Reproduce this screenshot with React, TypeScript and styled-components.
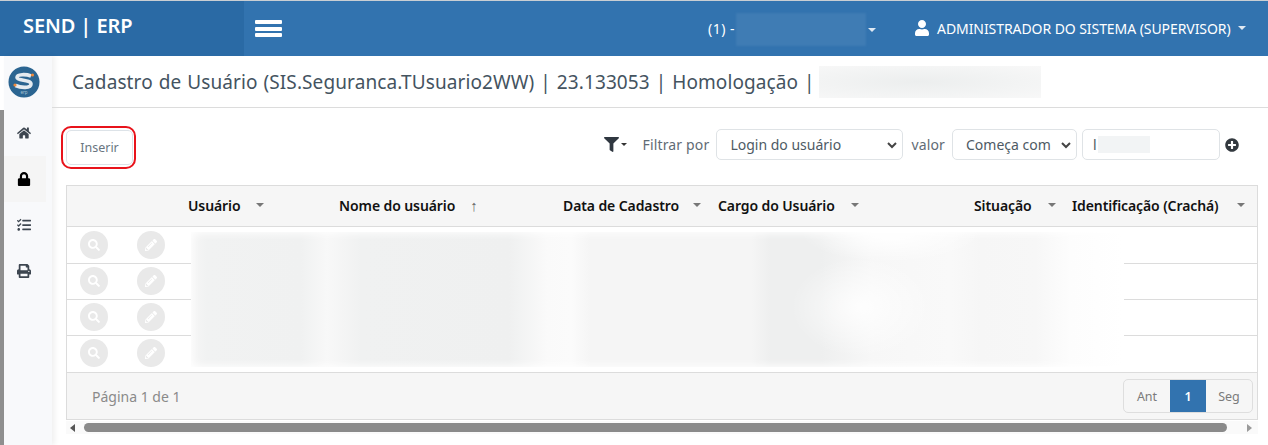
import React from "react";
import styled, { createGlobalStyle } from "styled-components";
import { FaFilter, FaHome, FaLock, FaPencilAlt, FaPlusCircle, FaPrint, FaSearch, FaTasks, FaUser } from "react-icons/fa";

const Global = createGlobalStyle`
  html, body { margin: 0; padding: 0; background: #fff; overflow: hidden; }
  body { font-family: "Noto Sans", "Open Sans", sans-serif; }
`;
const Page = styled.div`
  width: 1268px; height: 445px; display: flex; flex-direction: column; overflow: hidden;
  border-top: 1px solid #c9ced3; box-sizing: border-box; background: #fff;
`;
const Header = styled.header`
  height: 55px; flex: none; display: flex; align-items: stretch; background: #3273af; color: #fff;
`;
const Brand = styled.div`
  width: 244px; background: #2a6aa5; box-sizing: border-box; padding: 12px 0 0 23px;
  font-size: 20px; font-weight: 600; line-height: 26px; letter-spacing: -0.1px;
`;
const Burger = styled.div`
  width: 27px; height: 17px; margin: 19px 0 0 11px; display: flex; flex-direction: column; justify-content: space-between;
  span { display: block; height: 4px; border-radius: 1px; background: #fff; }
`;
const Spacer = styled.div`flex: 1;`;
const Company = styled.div`
  display: flex; align-items: center; font-size: 14px; letter-spacing: 0.5px; width: 172px; margin-right: 35px; box-sizing: border-box; padding: 0 0 1px 1px; position: relative;
`;
const Veil = styled.span`
  position: absolute; left: 29px; top: 12px; width: 130px; height: 33px; background: #3f7cb4; filter: blur(1px);
`;
const Caret = styled.span<{ $c?: string }>`
  display: inline-block; width: 0; height: 0; border-left: 4px solid transparent; border-right: 4px solid transparent;
  border-top: 4px solid ${p => p.$c || "#dfe9f3"};
`;
const CompanyCaret = styled(Caret)`position: absolute; left: 161px; top: 27px;`;
const UserBox = styled.div`
  display: flex; align-items: center; gap: 7px; font-size: 14px; width: 354px; padding-bottom: 1px; white-space: nowrap; letter-spacing: -0.07px;
`;
const Body = styled.div`flex: 1; display: flex; min-height: 0;`;
const Rail = styled.div`
  width: 4px; flex: none; padding-top: 54px; box-sizing: border-box;
  i { display: block; height: 100%; background: #8f8f8f; }
`;
const Side = styled.nav`
  width: 48px; flex: none; background: #f8f9fb; box-shadow: 3px 0 5px rgba(0,0,0,.06); display: flex; flex-direction: column; align-items: flex-start;
`;
const Logo = styled.div`height: 54px; width: 40px; display: flex; align-items: center; justify-content: center; padding-bottom: 2px; box-sizing: border-box;`;
const SideItem = styled.div<{ $on?: boolean }>`
  width: 42px; height: 46px; display: flex; align-items: center; justify-content: center; font-size: 14px; padding-right: 2px; box-sizing: border-box;
  color: ${p => p.$on ? "#000" : "#3d4650"}; background: ${p => p.$on ? "#f5f5f5" : "transparent"};
`;
const Main = styled.main`flex: 1; min-width: 0; display: flex; flex-direction: column;`;
const TitleBar = styled.div`
  height: 52px; flex: none; border-bottom: 1px solid #dcdcdc; box-sizing: border-box; padding: 0 0 0 20px; display: flex; align-items: center; position: relative;
  color: #44535f; font-size: 19px; white-space: pre; letter-spacing: 0.1px; word-spacing: 0.9px;
`;
const TitleVeil = styled.span`
  position: absolute; left: 767px; top: 10px; width: 222px; height: 32px;
  background: radial-gradient(ellipse at 45% 50%, #eceeee 0%, #f3f4f4 60%, #f8f8f8 100%);
`;
const Toolbar = styled.div`
  height: 77px; flex: none; display: flex; align-items: flex-start; padding: 18px 29px 0 9px; box-sizing: border-box;
`;
const Highlight = styled.div`
  border: 2px solid #e8131b; border-radius: 10px; padding: 2px 1px 2px 3px; display: flex;
`;
const InsertBtn = styled.button`
  width: 67px; height: 35px; border: 1px solid #dde3e8; border-radius: 5px; background: #fff; color: #69757f; font: inherit; font-size: 12.5px; padding: 0;
`;
const Filters = styled.div`
  flex: 1; display: flex; align-items: center; justify-content: flex-end; height: 31px; margin-top: 3px; font-size: 14px; color: #5f6b75; white-space: nowrap;
`;
const FilterIcon = styled.div`display: flex; align-items: center; gap: 2px; color: #2f3740; font-size: 15px; margin-right: 16px; `;
const FilterCaret = styled(Caret)`border-top-color: #333; border-left-width: 3px; border-right-width: 3px; border-top-width: 3px;`;
const Label = styled.span`margin-right: 7px; letter-spacing: 0.15px;`;
const Selectish = styled.div<{ $w: number }>`
  width: ${p => p.$w}px; height: 31px; box-sizing: border-box; border: 1px solid #dfe3e6; border-radius: 5px; background: #fff;
  display: flex; align-items: center; justify-content: space-between; padding: 0 4px 0 13px; color: #4e5a64; font-size: 14px; margin-right: 8px;
`;
const Second = styled(Selectish)`margin-right: 5px;`;
const ValueBox = styled.div`
  width: 138px; height: 31px; box-sizing: border-box; border: 1px solid #dfe3e6; border-radius: 5px; background: #fff; margin-right: 5px;
  display: flex; align-items: center; padding-left: 10px; color: #4e5a64; font-size: 14px; gap: 1px;
  i { display: block; width: 52px; height: 17px; background: #f2f4f5; }
`;
const Plus = styled.div`display: flex; color: #33393f; font-size: 14px;`;
const Wrap = styled.div`padding-left: 14px; width: 1206px; box-sizing: border-box; flex: none;`;
const Panel = styled.div`border: 1px solid #dcdcdc; position: relative; width: 1192px; box-sizing: border-box; background: #fff;`;
const Cols = "121px 151px 224px 155px 256px 98px 1fr";
const Head = styled.div`
  height: 41px; box-sizing: border-box; display: grid; grid-template-columns: ${Cols}; align-items: center; background: #f6f6f6; border-bottom: 1px solid #dcdcdc;
  font-size: 14px; font-weight: 600; color: #111; white-space: nowrap; letter-spacing: -0.1px;
`;
const HeadCell = styled.div<{ $gap?: number }>`display: flex; align-items: center; gap: ${p => p.$gap ?? 16}px; padding-bottom: 2px;`;
const SortArrow = styled.span`font-size: 15px; color: #666; font-weight: 400; line-height: 1;`;
const Row = styled.div<{ $h: number; $top: number }>`
  height: ${p => p.$h}px; box-sizing: border-box; border-bottom: 1px solid #dcdcdc; display: flex; align-items: flex-start; padding: ${p => p.$top}px 0 0 13px; gap: 29px;
`;
const RoundAction = styled.div`
  width: 28px; height: 28px; border-radius: 50%; background: #e9e9e9; color: #fff; display: flex; align-items: center; justify-content: center; font-size: 12px;
`;
const Blur = styled.div`
  position: absolute; left: 124px; top: 46px; width: 933px; height: 135px; pointer-events: none; background-color: #fff;
  box-shadow: inset 0 0 9px 1px #fff;
  background-image:
    radial-gradient(ellipse 70px 50px at 670px 75px, rgba(255,255,255,.85) 0%, rgba(255,255,255,0) 100%),
    radial-gradient(ellipse 90px 30px at 700px 0px, rgba(255,255,255,.9) 20%, rgba(255,255,255,0) 100%),
    linear-gradient(90deg, #f6f6f6 0, #f1f2f2 16px, #f0f1f1 110px, #f8f8f8 136px, #f0f1f1 170px, #eff0f0 318px, #fafafa 356px, #fbfbfb 380px, #f5f5f5 400px, #f5f5f5 560px, #eeefef 580px, #eeefef 630px, #f7f7f7 680px, #f9f9f9 760px, #f6f6f6 790px, #f7f7f7 845px, #fdfdfd 880px, #ffffff 933px);
`;
const Foot = styled.div`
  height: 46px; background: #f6f6f6; display: flex; align-items: center; justify-content: space-between; padding: 0 4px 0 25px; box-sizing: border-box;
  font-size: 14px; color: #8a8a8a;
`;
const Pager = styled.div`display: flex; height: 34px; border: 1px solid #dedede; border-radius: 5px; overflow: hidden; box-sizing: border-box; font-size: 12.5px;`;
const PageBtn = styled.div<{ $on?: boolean; $w: number }>`
  width: ${p => p.$w}px; display: flex; align-items: center; justify-content: center;
  background: ${p => p.$on ? "#3273af" : "transparent"}; color: ${p => p.$on ? "#fff" : "#7b7b7b"}; font-weight: ${p => p.$on ? 600 : 400};
`;
const Scroll = styled.div`
  height: 13px; width: 1192px; display: flex; align-items: center; background: #fafafa; padding: 0 6px 0 4px; box-sizing: border-box; margin-top: 1px;
`;
const Arrow = styled.span<{ $r?: boolean }>`
  width: 0; height: 0; border-top: 4px solid transparent; border-bottom: 4px solid transparent;
  ${p => p.$r ? "border-left: 5px solid #9a9a9a;" : "border-right: 5px solid #555;"}
`;
const Thumb = styled.div`height: 9px; width: 1143px; border-radius: 5px; background: #8a8a8a; margin: 0 auto 0 9px;`;

const Chevron = () => (
  <svg width="12" height="12" viewBox="0 0 12 12"><path d="M2 4l4 4 4-4" fill="none" stroke="#444" strokeWidth="2" /></svg>
);
const SLogo = () => (
  <svg width="32" height="32" viewBox="0 0 32 32">
    <circle cx="16" cy="16" r="15.5" fill="#2b6591" />
    <path d="M23 10C18 8 9 8 9 11.5S23 13.5 23 18 13 22 7.5 19.5" fill="none" stroke="#e4ebf0" strokeWidth="3.6" />
    <circle cx="24.5" cy="9" r="1.6" fill="#ee8a3c" /><circle cx="7" cy="19" r="1.6" fill="#ee8a3c" />
    <text x="16" y="28" textAnchor="middle" fontSize="4.5" fill="#a9c2d4" fontFamily="Noto Sans, sans-serif">erp</text>
  </svg>
);

const rows = [{ h: 37, top: 4 }, { h: 36, top: 3 }, { h: 36, top: 3 }, { h: 37, top: 3 }];
export default function App() {
  return (
    <Page>
      <Global />
      <Header>
        <Brand>SEND | ERP</Brand>
        <Burger><span /><span /><span /></Burger>
        <Spacer />
        <Company>(1) -<Veil /><CompanyCaret /></Company>
        <UserBox><FaUser size={16} />ADMINISTRADOR DO SISTEMA (SUPERVISOR)<Caret /></UserBox>
      </Header>
      <Body>
        <Rail><i /></Rail>
        <Side>
          <Logo><SLogo /></Logo>
          <SideItem><FaHome /></SideItem>
          <SideItem $on><FaLock /></SideItem>
          <SideItem><FaTasks /></SideItem>
          <SideItem><FaPrint /></SideItem>
        </Side>
        <Main>
          <TitleBar>Cadastro de Usuário (SIS.Seguranca.TUsuario2WW) | 23.133053 | Homologação |<TitleVeil /></TitleBar>
          <Toolbar>
            <Highlight><InsertBtn>Inserir</InsertBtn></Highlight>
            <Filters>
              <FilterIcon><FaFilter /><FilterCaret /></FilterIcon>
              <Label>Filtrar por</Label>
              <Selectish $w={187}>Login do usuário<Chevron /></Selectish>
              <Label>valor</Label>
              <Second $w={125}>Começa com<Chevron /></Second>
              <ValueBox>l<i /></ValueBox>
              <Plus><FaPlusCircle /></Plus>
            </Filters>
          </Toolbar>
          <Wrap>
            <Panel>
              <Head>
                <div />
                <HeadCell>Usuário<Caret $c="#777" /></HeadCell>
                <HeadCell $gap={15}>Nome do usuário<SortArrow>↑</SortArrow></HeadCell>
                <HeadCell $gap={14}>Data de Cadastro<Caret $c="#777" /></HeadCell>
                <HeadCell>Cargo do Usuário<Caret $c="#777" /></HeadCell>
                <HeadCell>Situação<Caret $c="#777" /></HeadCell>
                <HeadCell $gap={18}>Identificação (Crachá)<Caret $c="#777" /></HeadCell>
              </Head>
              {rows.map((r, i) => (
                <Row key={i} $h={r.h} $top={r.top}>
                  <RoundAction><FaSearch /></RoundAction>
                  <RoundAction><FaPencilAlt /></RoundAction>
                </Row>
              ))}
              <Blur />
              <Foot>
                Página 1 de 1
                <Pager>
                  <PageBtn $w={46}>Ant</PageBtn>
                  <PageBtn $w={36} $on>1</PageBtn>
                  <PageBtn $w={46}>Seg</PageBtn>
                </Pager>
              </Foot>
            </Panel>
            <Scroll><Arrow /><Thumb /><Arrow $r /></Scroll>
          </Wrap>
        </Main>
      </Body>
    </Page>
  );
}
